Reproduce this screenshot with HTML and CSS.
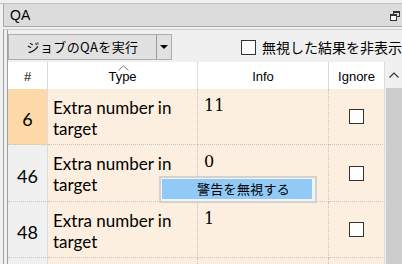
FILE: index.html
```html
<!DOCTYPE html>
<html lang="ja">
<head>
<meta charset="UTF-8">
<title>QA</title>
<link rel="stylesheet" href="styles.css">
</head>
<body>

<div class="topline"></div>

<div class="titlebar">
  <span class="title">QA</span>
  <svg class="restore" width="10" height="10" viewBox="0 0 10 10">
    <rect x="3.5" y="0.5" width="6" height="5" fill="#dcdcdc" stroke="#333"/>
    <rect x="3.5" y="0.5" width="6" height="1.5" fill="#333"/>
    <rect x="0.5" y="3.5" width="6" height="6" fill="#fff" stroke="#333"/>
    <rect x="0.5" y="3.5" width="6" height="1.5" fill="#333"/>
  </svg>
</div>

<div class="panel">
  <div class="inner">

    <div class="toolbar">
      <div class="split-btn">
        <span class="btn-main">ジョブのQAを実行</span>
        <span class="btn-arrow"></span>
      </div>
      <label class="hide-check">
        <span class="box"></span>
        <span class="hide-text">無視した結果を非表示</span>
      </label>
    </div>

    <div class="table-wrap">
      <div class="grid">
        <div class="th">#</div>
        <div class="th th-type">
          <svg class="sort" width="11" height="6" viewBox="0 0 11 6"><polyline points="0.5,5.5 5.5,0.8 10.5,5.5" fill="none" stroke="#777"/></svg>
          Type
        </div>
        <div class="th">Info</div>
        <div class="th">Ignore</div>

        <div class="td num selected">6</div>
        <div class="td type">Extra number in<br>target</div>
        <div class="td info">11</div>
        <div class="td ign"><span class="box"></span></div>

        <div class="td num">46</div>
        <div class="td type">Extra number in<br>target</div>
        <div class="td info">0</div>
        <div class="td ign"><span class="box"></span></div>

        <div class="td num">48</div>
        <div class="td type">Extra number in<br>target</div>
        <div class="td info">1</div>
        <div class="td ign"><span class="box"></span></div>

        <div class="td num"></div>
        <div class="td type"></div>
        <div class="td info"></div>
        <div class="td ign"></div>
      </div>

      <div class="scrollbar">
        <div class="scroll-up">
          <svg width="10" height="6" viewBox="0 0 10 6"><polyline points="0.5,5.5 5,1 9.5,5.5" fill="none" stroke="#333" stroke-width="1.2"/></svg>
        </div>
        <div class="scroll-thumb"></div>
      </div>
    </div>

  </div>
</div>

<!-- right-click menu over the grid -->
<div class="menu">
  <div class="menu-item">警告を無視する</div>
</div>

</body>
</html>
```

FILE: styles.css
```css
body {
  margin: 0;
  width: 402px;
  height: 264px;
  overflow: hidden;
  position: relative;
  background: #f0f0f0;
  font-family: "Liberation Sans", "Noto Sans CJK JP", sans-serif;
  color: #000;
}

.topline {
  height: 3px;
  border-bottom: 1px solid #c4c4c4;
}

.titlebar {
  margin-left: 3px;
  height: 22px;
  border-left: 1px solid #a8a8a8;
  border-bottom: 1px solid #a8a8a8;
  background: #dcdcdc;
  display: flex;
  align-items: center;
  justify-content: space-between;
  padding: 0 0 0 6px;
  font-size: 14px;
}
.restore {
  margin-right: 2px;
  margin-top: 2px;
}

.panel {
  margin: 2px 0 0 3px;
  border-top: 1px solid #c8c8c8;
  border-left: 1px solid #a0a0a0;
  padding-left: 3px;
}
.inner {
  border-left: 1px solid #a0a0a0;
  padding-top: 4px;
}

.toolbar {
  display: flex;
  align-items: center;
  height: 26px;
}
.split-btn {
  width: 164px;
  height: 26px;
  box-sizing: border-box;
  border: 1px solid #adadad;
  background: #e1e1e1;
  display: flex;
}
.btn-main {
  flex: 1;
  border-right: 1px solid #9a9a9a;
  text-align: center;
  line-height: 24px;
  font-size: 13px;
  letter-spacing: 0.4px;
  font-family: "Noto Sans CJK JP", sans-serif;
}
.btn-arrow {
  width: 14px;
  position: relative;
}
.btn-arrow::after {
  content: "";
  position: absolute;
  left: 3px;
  top: 10px;
  border-left: 4px solid transparent;
  border-right: 4px solid transparent;
  border-top: 4px solid #000;
}

.hide-check {
  display: flex;
  align-items: center;
  margin-left: 69px;
  white-space: nowrap;
}
.hide-text {
  margin-left: 6px;
  font-size: 14px;
  font-family: "Noto Sans CJK JP", sans-serif;
}
.box {
  display: inline-block;
  width: 15px;
  height: 15px;
  box-sizing: border-box;
  border: 1px solid #333;
  background: #fff;
}

.table-wrap {
  display: flex;
  margin-top: 2px;
}
.grid {
  display: grid;
  grid-template-columns: 40px 150px 131px 56px;
  grid-template-rows: 27px 56px 57px 56px 56px;
}
.th {
  background: #fff;
  border-right: 1px solid #dcdcdc;
  display: flex;
  align-items: center;
  justify-content: center;
  font-size: 13px;
  padding-top: 2px;
  position: relative;
}
.sort {
  position: absolute;
  top: 3px;
  left: 70px;
}
.td {
  background: #fdefdf;
  border-right: 1px dotted #c4c4c4;
  border-bottom: 1px dotted #c4c4c4;
}
.td.num {
  background: #f0f0f0;
  display: flex;
  align-items: center;
  justify-content: center;
  padding-top: 5px;
  font-family: "Lato", sans-serif;
  font-size: 18px;
  border-right: 1px solid #dcdcdc;
}
.td.num.selected {
  background: #fdd9a9;
}
.td.type {
  font-family: "Lato", sans-serif;
  font-size: 17px;
  line-height: 21px;
  padding: 8px 0 0 5px;
}
.td.info {
  font-family: "DejaVu Serif", serif;
  font-size: 16px;
  padding: 7px 0 0 6px;
}
.td.ign {
  display: flex;
  align-items: center;
  justify-content: center;
  border-right: 1px solid #dcdcdc;
}

.scrollbar {
  width: 16px;
  margin-left: 1px;
  display: flex;
  flex-direction: column;
}
.scroll-up {
  height: 26px;
  display: flex;
  justify-content: center;
  padding-top: 10px;
  box-sizing: border-box;
}
.scroll-thumb {
  flex: 1;
  height: 200px;
  background: #cdcdcd;
}

.menu {
  position: absolute;
  left: 159px;
  top: 176px;
  border: 2px solid #d2d2d2;
  background: #f4f4f4;
  padding: 1px 3px 2px 1px;
}
.menu-item {
  width: 150px;
  height: 20px;
  box-sizing: border-box;
  background: #91c9f7;
  padding-left: 35px;
  font-size: 13px;
  line-height: 20px;
  letter-spacing: 0.3px;
  font-family: "Noto Sans CJK JP", sans-serif;
}
```
